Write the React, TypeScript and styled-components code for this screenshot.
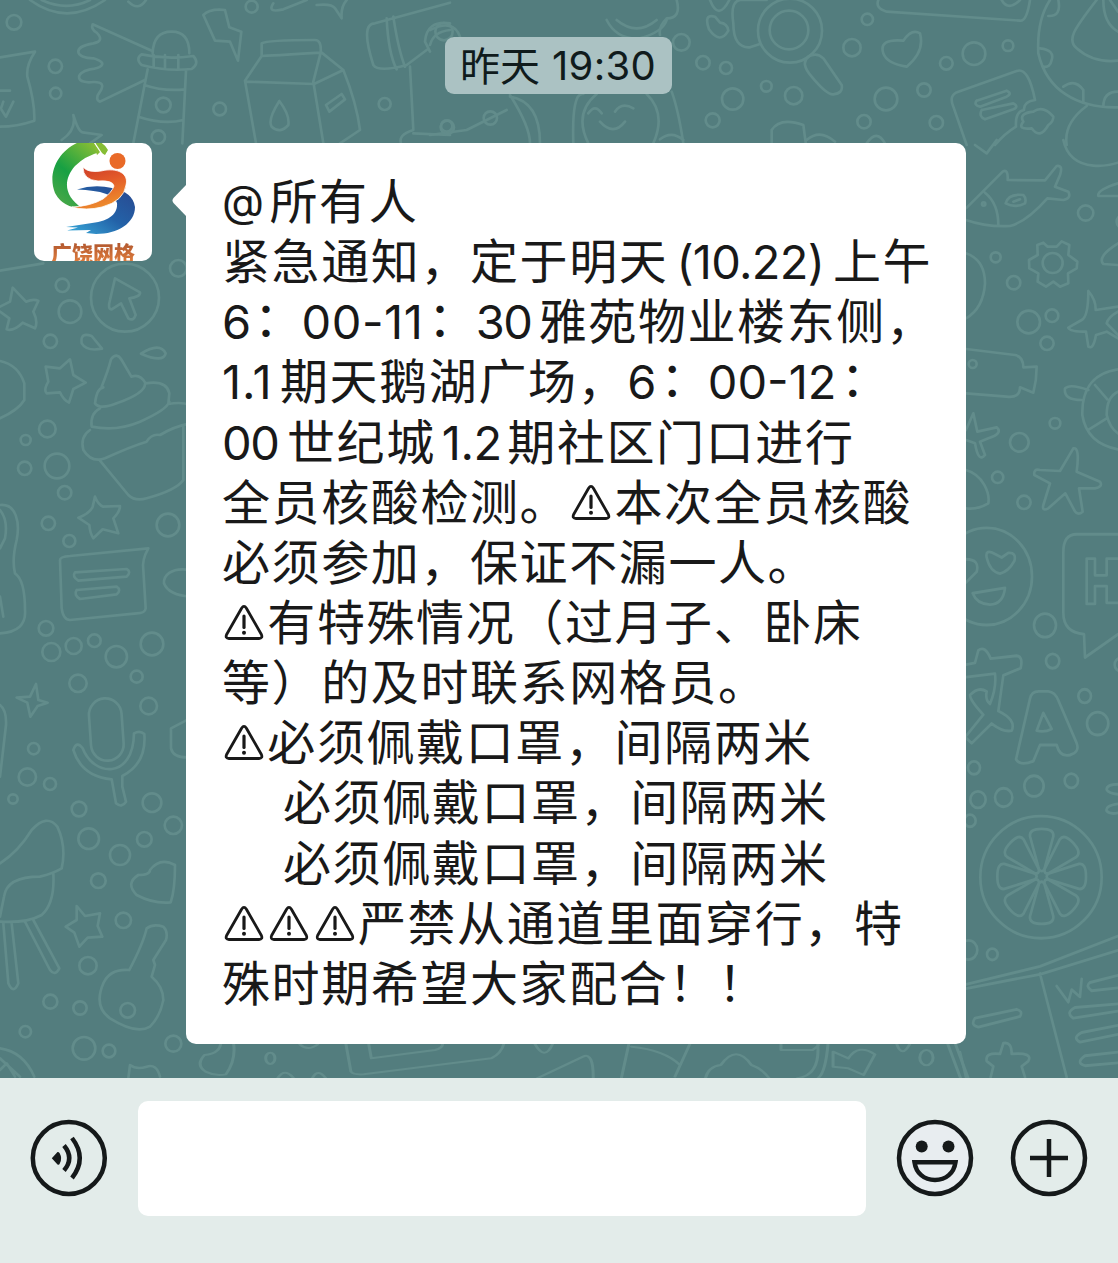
import React from "react";
import styled, { createGlobalStyle } from "styled-components";

const GlobalStyle = createGlobalStyle`
  * { box-sizing: border-box; }
  body { margin: 0; background: #e3ecea; }
`;

const Screen = styled.main`
  width: 1118px;
  height: 1263px;
  display: flex;
  flex-direction: column;
  overflow: hidden;
  font-family: Inter, "Noto Sans CJK SC", sans-serif;
  color: #191919;
`;

const Chat = styled.section`
  position: relative;
  height: 1078px;
  flex: none;
  display: flex;
  flex-direction: column;
  align-items: stretch;
  padding-top: 37px;
  background: #537d7e;
  overflow: hidden;
`;

const Wallpaper = styled.svg`
  position: absolute;
  inset: 0;
  fill: none;
  stroke: #628c8b;
  stroke-width: 8;
  stroke-linecap: round;
  stroke-linejoin: round;
`;

const TimeStamp = styled.time`
  position: relative;
  align-self: center;
  width: 227px;
  height: 57px;
  display: flex;
  align-items: flex-start;
  margin-right: 1px;
  padding-left: 15px;
  border-radius: 9px;
  background: #abc2c3;
  color: #101b1c;
  font-size: 40px;
  white-space: pre;
`;

const TimeDay = styled.span`
  width: 92px;
  font-family: "Noto Sans CJK SC", sans-serif;
  line-height: 55px;
`;

const TimeClock = styled.span`
  letter-spacing: 0.3px;
  line-height: 58px;
`;

const MessageRow = styled.article`
  position: relative;
  display: flex;
  align-items: flex-start;
  margin-top: 49px;
  padding-left: 34px;
`;

const Avatar = styled.div`
  width: 118px;
  height: 118px;
  border-radius: 10px;
  overflow: hidden;
  background: #fff;
  display: flex;
  flex-direction: column;
`;

const AvatarMark = styled.svg`
  display: block;
  flex: none;
`;

const AvatarName = styled.span`
  height: 22px;
  padding-left: 17px;
  font: 900 21px/26px "Noto Sans CJK SC", sans-serif;
  white-space: nowrap;
  background: linear-gradient(#a8502c, #dd7b3c);
  background-clip: text;
  color: transparent;
`;

const Tail = styled.svg`
  display: block;
  margin: 40px -1px 0 20px;
  flex: none;
`;

const Bubble = styled.div`
  width: 780px;
  height: 901px;
  padding: 27px 0 0 36px;
  border-radius: 10px;
  background: #fff;
`;

const Line = styled.div<{ $indent?: number }>`
  display: flex;
  align-items: flex-start;
  height: 60.15px;
  padding-left: ${(p) => p.$indent ?? 0}px;
  white-space: pre;
`;

const Han = styled.span`
  font: 400 48px/57px "Noto Sans CJK SC", sans-serif;
  letter-spacing: 1.6px;
`;

const Colon = styled(Han)`
  transform: translate(2px, -3px);
`;

const Latin = styled.span<{ $width: number; $pad?: number; $track?: number; $size?: number }>`
  width: ${(p) => p.$width}px;
  flex: none;
  padding-left: ${(p) => p.$pad ?? 0}px;
  font: 400 ${(p) => p.$size ?? 47}px/63px Inter, sans-serif;
  letter-spacing: ${(p) => p.$track ?? 0}px;
`;

const WarnBox = styled.svg`
  flex: none;
  display: block;
`;

const Warn = () => (
  <WarnBox width="45.3" height="60" viewBox="0 0 45.3 60" role="img" aria-label="⚠">
    <path
      d="M19.6 17.2Q22 13.600 24.400 17.200L39.400 43.500Q41 47.300 37 47.500H7Q3 47.300 4.600 43.500Z"
      fill="none"
      stroke="#191919"
      strokeWidth="2.8"
      strokeLinejoin="round"
    />
    <path d="M22 25V36.500" stroke="#191919" strokeWidth="3.200" strokeLinecap="round" />
    <circle cx="22" cy="41.800" r="2" fill="#191919" />
  </WarnBox>
);

const Toolbar = styled.footer`
  flex: 1;
  display: flex;
  align-items: flex-start;
  padding: 23px 30px 0;
  background: #e3ecea;
`;

const IconButton = styled.button<{ $left?: number }>`
  width: 78px;
  height: 78px;
  margin: 18px 0 0 ${(p) => p.$left ?? 0}px;
  padding: 0;
  border: 0;
  background: none;
  color: #15191a;
`;

const Field = styled.input`
  width: 728px;
  height: 115px;
  margin-left: 29.500px;
  border: 0;
  border-radius: 10px;
  background: #fff;
  font-size: 46px;
  outline: 0;
`;

const Glyph = styled.svg`
  display: block;
  fill: none;
  stroke: currentColor;
  stroke-width: 4.5;
`;

type Dot = [number, number, number];
const Dots = ({ items }: { items: Dot[] }) => (
  <>
    {items.map(([x, y, r], i) => (
      <circle key={i} cx={x} cy={y} r={r} />
    ))}
  </>
);

const SEGMENT = "M-8-20L-35-112Q-38-133 0-133Q38-133 35-112L8-20Q0-10-8-20Z";

const Doodles = () => (
  <Wallpaper width="1118" height="1078" viewBox="0 0 1118 1078" aria-hidden="true">
    <g transform="scale(.33333)">
      <path d="M90 0Q200 80 315 0M125 0Q200 35 270 0M385 5Q415 35 438 0M0 172L105 155Q78 195 82 230Q105 310 103 362Q50 380 0 380M0 272H30M5 330L18 350L40 305M3 325L10 305" />
      <path d="M457 153L278 73Q272 88 290 98Q315 123 280 130C215 140 225 175 280 175C330 190 300 205 270 208C220 220 230 253 280 246Q320 245 300 275Q283 298 300 305L435 240" />
      <path d="M458 160Q460 95 515 95Q568 95 568 160M425 163Q500 180 580 168Q600 190 575 207Q500 215 425 195Q405 176 425 163M461 165V202M495 165V207M535 165V207M443 208L400 430M558 212L547 430M433 255Q490 275 555 268M415 350Q490 375 550 360" />
      <path d="M610 45Q630 25 675 30L688 82L724 95L714 182L690 125L645 122ZM785 130Q800 120 945 120Q965 120 962 158Q850 165 785 168ZM785 168L735 242L768 430M962 158L940 245L970 430M738 245L942 252L1030 210L965 158M1030 210Q1070 310 1080 390L1020 430M978 315L1025 282L1035 298L988 335ZM838 303Q802 360 815 380Q840 403 865 375Q870 345 838 303Z" />
      <path d="M220 345Q235 395 248 397L305 405L270 430M220 345Q230 390 185 420M820 10Q800 40 850 28L920 0M950 15Q995 10 1005 25L1025 55Q1022 20 1040 0M1350 8L1125 70Q1080 70 1120 195Q1135 218 1220 195L1280 150M1160 55Q1165 160 1190 208M1180 50Q1195 150 1215 200M1350 70Q1280 60 1275 125L1290 155M1350 90Q1300 95 1290 135M1230 200L1240 390Q1190 405 1205 435M1240 400L1350 405" />
      <Dots items={[[42,67,22],[166,199,20],[167,280,17],[755,20,18],[659,327,19],[1154,312,18],[490,315,22],[475,411,20],[1340,378,17]]} />
    </g>
    <g transform="translate(660 0) scale(.33333)">
      <path d="M50 0Q65 55 20 55Q-5 80 0 105M150 0Q175 65 208 0M165 50Q130 40 147 88Q180 135 205 92Q202 70 180 68ZM320 0H240Q210 5 220 70Q220 145 270 142L300 132M445 170Q420 190 455 230Q500 285 520 283Q550 280 545 255L490 175Q470 155 445 170M655 0Q645 25 680 35L1080 62Q1100 65 1110 0M1025 0Q1045 35 1080 0M670 160Q655 115 730 122Q755 85 780 100Q795 155 740 200Q680 190 670 160" />
      <circle cx="390" cy="92" r="96" /><circle cx="387" cy="90" r="58" />
      <path d="M1170 0Q1130 60 1135 160C1160 270 1250 325 1374 322M1310 0C1240 90 1220 120 1250 145Q1300 190 1374 182M1195 0Q1205 50 1165 48M1140 145Q1185 150 1175 180Q1170 205 1150 200M1210 260Q1245 235 1270 270V305M1330 320Q1330 275 1374 275M1330 0Q1330 70 1374 95M1350 0L1374 35M1280 318Q1210 370 1220 435" />
      <path d="M920 435L880 320Q865 285 895 275L1070 213Q1105 200 1125 300Q1090 305 1092 330Q1065 335 1068 380Q1035 400 1005 435M950 302L1040 272Q1058 280 1040 290L960 320Q940 315 950 302M965 330L1060 310Q1078 320 1060 328L975 358Q955 350 965 330M1120 335Q1150 315 1180 350Q1180 365 1165 375Q1140 420 1115 385Q1070 390 1090 365Q1075 340 1120 335" />
      <path d="M35 275Q55 330 70 430M0 418Q35 390 70 420M335 435V390Q360 350 430 375L438 435M440 420Q480 385 525 425M620 430Q650 385 675 430" />
      <Dots items={[[64,127,25],[129,188,20],[198,204,18],[319,259,16],[218,297,32],[401,287,26],[158,361,21],[576,143,26],[622,58,17],[859,190,19],[942,161,34],[1044,137,16],[792,270,20],[678,297,34],[612,365,20],[829,368,20]]} />
    </g>
    <g transform="translate(430 20) scale(.33333)">
      <path d="M0 30Q70 -5 90 50M530 0Q560 60 630 55Q700 35 710 0M560 0Q620 50 680 0M0 345L110 330L230 270M240 225Q300 320 300 370M240 230Q330 245 330 370M430 370Q425 215 460 222M475 370Q430 280 500 222M650 222Q710 280 670 370M475 280Q495 250 515 280M555 275Q575 245 610 265M510 305Q550 350 585 305" />
      <Dots items={[[42,35,26],[52,322,20],[181,294,20]]} />
    </g>
    <g transform="translate(0 260) scale(.33333)">
      <path d="M0 32L130 10M0 155L28 175L20 208Q40 215 68 188L105 205Q115 185 100 155L115 123Q102 115 78 125L38 83L30 125L0 140" />
      <circle cx="375" cy="113" r="102" />
      <path d="M345 55L420 97Q422 110 388 115L407 165Q400 185 385 175L363 130L335 148Q322 148 330 120ZM245 250Q240 215 275 228L306 266Q260 275 245 250M423 281Q480 245 497 280Q490 310 423 281" />
      <path d="M210 298L220 345L257 368L220 387L207 428Q190 420 180 397L140 400Q130 390 145 365L137 320L180 325ZM0 303Q55 315 73 370V420Q55 450 0 475" />
      <path d="M305 380Q325 330 333 298Q350 275 365 300L394 350Q420 340 437 370Q500 360 508 400L505 432Q545 425 570 435M310 382Q290 385 285 430Q300 450 350 430Q435 400 435 372M300 445Q270 460 275 500Q350 515 420 485Q500 450 508 425M270 510Q240 530 250 570Q275 610 315 595Q390 560 440 545Q455 520 480 525Q520 500 570 490M300 602L385 705Q405 725 440 715Q530 690 550 660V500" />
      <path d="M285 710Q295 735 310 740L360 738Q360 755 340 775L355 820L308 808L280 835Q270 820 268 795L235 773Q270 760 278 740ZM0 735C50 730 60 790 50 840Q35 900 45 940Q75 960 75 1050Q80 1115 0 1120M0 750Q25 780 15 835L0 865M0 1010L10 1070" />
      <path d="M180 900Q180 890 210 888L445 865Q425 900 430 930L437 1045Q435 1060 410 1060L210 1080Q190 1080 185 1045ZM225 937L380 927Q395 935 380 950L235 962Q215 950 225 937M230 990L350 980Q365 990 350 1003L240 1017Q220 1005 230 990M570 930C510 920 490 950 492 970Q505 1005 570 1010" />
      <Dots items={[[187,76,20],[210,155,34],[151,244,20],[142,507,25],[77,540,15],[74,625,20],[171,618,37],[194,698,20],[145,790,20],[208,843,18],[504,795,34],[138,1105,22],[154,1176,27],[221,1158,24],[283,1142,19],[349,1190,32],[456,1152,34],[535,25,25]]} />
    </g>
    <g transform="translate(0 670) scale(.33333)">
      <path d="M108 42L115 90L143 98L113 108L91 140L82 98L50 83L90 80ZM0 105Q20 120 18 165L0 320" />
      <rect x="270" y="85" width="98" height="187" rx="49" transform="rotate(-4 320 180)" />
      <path d="M220 240Q230 210 248 235C280 320 400 330 402 190Q420 180 433 192Q440 280 367 318V350L378 395Q365 415 348 400L335 328Q245 320 220 240M570 145L513 175V235Q520 265 570 262M0 580Q55 545 95 480Q140 430 172 470Q200 530 185 595Q160 610 120 620Q20 620 12 680L0 740M160 610Q165 700 125 735Q80 760 0 755M10 760L25 940Q40 975 55 940L35 760M75 755L150 900Q165 920 178 895L100 750" />
      <path d="M415 615Q450 615 450 600Q480 560 525 585Q525 660 512 697Q460 702 410 675Q375 640 415 615M230 708L255 738L300 730L293 768L307 800L263 803L238 830L223 788L197 770L230 750ZM388 900Q430 820 440 775Q460 760 490 770Q505 785 498 810L460 870L465 885L455 920Q490 950 490 990Q480 1040 450 1070Q410 1095 330 1045Q280 1010 310 940Q330 895 388 900M0 1135Q70 1145 103 1220M0 1165L60 1220M0 1200L20 1180L45 1220M385 1225L390 1185Q410 1200 440 1190Q470 1180 480 1220" />
      <Dots items={[[234,40,26],[410,20,18],[446,108,25],[101,236,17],[82,321,26],[150,342,18],[39,387,14],[237,417,22],[266,506,31],[360,555,30],[433,508,22],[456,398,28],[520,466,26],[295,632,22],[370,751,23],[264,887,26],[151,995,21],[240,1014,20],[76,1085,17],[252,1135,34],[327,1143,19],[383,1021,22],[520,1121,24]]} />
    </g>
    <g transform="translate(960 140) scale(.33333)">
      <path d="M45 15L80 40L110 0M310 0Q325 70 400 77Q440 80 474 68M18 205L128 95Q145 85 143 120L255 121L290 78Q310 75 300 105L285 140L325 155Q335 175 310 180L262 175Q200 245 150 258Q80 262 18 240M75 158Q115 190 115 255M137 190Q145 160 190 165Q200 175 195 190Q165 205 137 190M160 185L180 178M474 130Q410 150 415 168H474M474 310Q410 350 430 372L474 375" />
      <path d="M250 308L263 320H290L305 304L328 315L325 345L352 365L350 385L324 400L325 430L300 440L280 425L258 440L233 425L235 400L208 385L207 360L233 345L232 315Z" />
      <circle cx="278" cy="369" r="30" />
      <path d="M18 340Q75 360 75 430Q70 505 18 535M385 453Q408 480 407 510L474 500M385 453Q385 530 365 540L325 563Q330 575 378 575L385 620Q400 630 408 585L440 575L474 595M474 515Q445 530 440 550L474 585M18 627L165 645Q190 650 190 682L230 680Q230 720 220 758L180 742Q180 775 140 770L18 760" />
      <path d="M474 688C390 700 365 760 367 825Q380 910 474 928M474 755Q440 770 440 825Q450 865 474 880M385 750Q330 730 315 745Q310 780 365 780M405 735L442 778M385 870L440 835M18 870L40 820L52 875L110 862Q130 880 85 895L60 905L75 945Q55 970 45 910L18 900M18 990C70 1005 90 1060 85 1090Q50 1110 18 1105M340 925Q360 920 350 995L420 1025Q430 1040 405 1045L357 1045L368 1115Q350 1130 340 1105L316 1060L265 1105Q245 1115 250 1095L270 1030L223 1005Q220 985 240 990L300 993Z" />
      <Dots items={[[71,192,5],[377,219,23],[107,352,15],[161,428,20],[206,546,34],[276,527,19],[261,610,20],[38,672,12],[178,907,28],[285,850,16],[113,1012,17],[192,1087,20],[490,245,20]]} />
    </g>
    <g transform="translate(960 520) scale(.33333 .35714)">
      <circle cx="80" cy="158" r="136" />
      <path d="M80 105Q75 80 105 95L125 105L145 92Q170 90 163 115Q145 145 120 150Q90 145 80 105M18 110Q60 110 50 145L18 175M38 205L135 190Q130 235 90 237Q50 235 38 205M474 40H350Q310 40 310 90V260Q310 315 372 320L375 385L474 320M380 108H405V155H440V108H474M380 108V235H405V185H440V232H474" />
      <path d="M18 405L45 400L55 365Q75 350 92 388L170 380Q190 382 182 415L130 435L115 535Q170 560 155 590Q130 595 95 570L35 625L18 610M18 440L105 430Q110 470 90 515Q75 505 80 480Q55 465 30 490Q30 505 70 545L18 605M210 500Q215 478 240 480H265Q285 482 295 505L350 625Q360 650 330 658Q300 665 290 630H240L220 675Q180 690 168 670ZM250 540L275 585Q255 595 230 590ZM474 740Q440 740 440 755Q445 765 474 768M474 795Q435 800 440 815Q450 825 474 820" />
      <ellipse cx="243" cy="1000" rx="182" ry="171" />
      {[0, 45, 90, 135, 180, 225, 270, 315].map((a) => (
        <path key={a} d={SEGMENT} transform={`translate(245 998) rotate(${a})`} />
      ))}
      <path d="M18 1300L240 1250L474 1165M18 1312L240 1272L474 1205M240 1270L320 1560M290 1305L325 1350L335 1315L360 1335L365 1285M474 1275L390 1295Q375 1305 395 1318L474 1310M474 1355L345 1365Q315 1380 340 1395L474 1375M474 1415L365 1435Q335 1450 360 1462L474 1440M474 1490L375 1500Q345 1520 375 1528L474 1520M45 1395L170 1370Q190 1375 180 1390L55 1420Q30 1415 45 1395M130 1465Q155 1460 155 1495Q220 1490 205 1515L185 1530L195 1560M130 1465L120 1495Q75 1490 80 1515L100 1530L92 1560M0 1490L18 1560" />
      <Dots items={[[255,295,33],[278,395,20],[374,493,19],[413,570,32],[42,694,18],[54,783,23],[131,777,26],[222,745,29],[334,730,20],[30,842,17],[97,1216,16],[25,1204,27],[482,405,18]]} />
    </g>
    <g transform="translate(180 1035) scale(.5102 .33333)" strokeWidth="6">
      <path d="M80 20Q80 55 48 60Q30 90 50 110Q70 125 90 118Q110 75 105 25M325 25L335 110Q340 120 360 118L610 70Q630 55 635 25M370 28L375 70L500 45Q515 40 515 25M700 130L790 65Q810 50 810 128M880 25L865 130M885 35Q950 45 980 90M1000 25L970 125M1030 130Q1035 95 1060 90Q1090 25 1120 90Q1140 100 1155 130M1178 28V45H1240Q1255 30 1250 28M1250 28Q1255 120 1210 130M1270 28Q1265 115 1250 130M1280 50L1310 70Q1330 25 1362 58L1340 120L1310 100L1280 95ZM1505 28L1530 130M1520 28L1545 130" />
      <ellipse cx="177" cy="70" rx="9" ry="17" /><ellipse cx="1463" cy="68" rx="13" ry="23" />
      <path d="M235 28Q250 50 270 28M192 128Q205 98 222 128M260 128Q270 100 285 128M695 25Q715 80 730 28M1405 28Q1415 70 1430 28" />
    </g>
  </Wallpaper>
);

const AvatarLogo = () => (
  <AvatarMark width="118" height="96" viewBox="0 0 118 96" aria-hidden="true">
    <defs>
      <linearGradient id="leaf" x1="0.8" y1="0" x2="0.2" y2="1">
        <stop offset="0" stopColor="#86bd35" />
        <stop offset=".55" stopColor="#17a043" />
        <stop offset="1" stopColor="#4ca848" />
      </linearGradient>
      <linearGradient id="flame" x1="0" y1="0" x2=".4" y2="1">
        <stop offset="0" stopColor="#c93828" />
        <stop offset=".5" stopColor="#e35a29" />
        <stop offset="1" stopColor="#ed8a2c" />
      </linearGradient>
      <linearGradient id="wave" x1="1" y1="0" x2="0" y2="1">
        <stop offset="0" stopColor="#29478e" />
        <stop offset=".5" stopColor="#2362a8" />
        <stop offset="1" stopColor="#3aaddc" />
      </linearGradient>
    </defs>
    <path d="M43 46.500Q60 41 78 45Q99 49 101 64C101 80 84 91 62 91L52 90L57 87L33 87.500L44 84.500L32 84L58 80C76 78 84 70 83 60Q80 48 43 46.500Z" fill="url(#wave)" />
    <path d="M60-1L66 9Q51 13 41 23C28 38 31 54 48 65Q29 65 21 50C13 30 24 8 45-1Z" fill="url(#leaf)" />
    <path d="M59-1L66 9L63 12M61-1Q68-3 74 7L71 12Q64 9 61-1Z" fill="#86bd35" />
    <path d="M60-1L68 11" stroke="#fff" strokeWidth="1.200" />
    <path d="M49 24Q54 30 67 28C84 24 95 31 92 42Q90 58 68 64Q52 68 38 64Q57 63 69 56Q78 49 80 43Q79 37 64 38Q49 37 49 24Z" fill="url(#flame)" stroke="#fff" strokeWidth=".8" />
    <circle cx="83.500" cy="18" r="8" fill="#e96a28" />
  </AvatarMark>
);

export default function App() {
  return (
    <Screen>
      <GlobalStyle />
      <Chat>
        <Doodles />
        <TimeStamp>
          <TimeDay>昨天</TimeDay>
          <TimeClock>19:30</TimeClock>
        </TimeStamp>
        <MessageRow>
          <Avatar>
            <AvatarLogo />
            <AvatarName>广饶网格</AvatarName>
          </Avatar>
          <Tail width="15" height="36" viewBox="0 0 15 36" aria-hidden="true">
            <path d="M15 1L1.500 15Q-.5 17.500 1.500 20L15 34Z" fill="#fff" />
          </Tail>
          <Bubble>
            <Line><Latin $width={47.5} $size={43.500}>@</Latin><Han>所有人</Han></Line>
            <Line><Han>紧急通知，定于明天</Han><Latin $width={164.5} $pad={8} $track={-0.7}>(10.22)</Latin><Han>上午</Han></Line>
            <Line><Latin $width={30} $track={-1}>6</Latin><Colon>：</Colon><Latin $width={124.5} $track={0.5}>00-11</Latin><Colon>：</Colon><Latin $width={63} $track={-1.5}>30</Latin><Han>雅苑物业楼东侧，</Han></Line>
            <Line><Latin $width={58} $track={1}>1.1</Latin><Han>期天鹅湖广场，</Han><Latin $width={31} $track={-1}>6</Latin><Colon>：</Colon><Latin $width={131}>00-12</Latin><Colon>：</Colon></Line>
            <Line><Latin $width={65} $track={-1.5}>00</Latin><Han>世纪城</Han><Latin $width={71.5} $pad={6} $track={-0.5}>1.2</Latin><Han>期社区门口进行</Han></Line>
            <Line><Han>全员核酸检测。</Han><Warn /><Han>本次全员核酸</Han></Line>
            <Line><Han>必须参加，保证不漏一人。</Han></Line>
            <Line><Warn /><Han>有特殊情况（过月子、卧床</Han></Line>
            <Line><Han>等）的及时联系网格员。</Han></Line>
            <Line><Warn /><Han>必须佩戴口罩，间隔两米</Han></Line>
            <Line $indent={61}><Han>必须佩戴口罩，间隔两米</Han></Line>
            <Line $indent={61}><Han>必须佩戴口罩，间隔两米</Han></Line>
            <Line><Warn /><Warn /><Warn /><Han>严禁从通道里面穿行，特</Han></Line>
            <Line><Han>殊时期希望大家配合！！</Han></Line>
          </Bubble>
        </MessageRow>
      </Chat>
      <Toolbar>
        <IconButton aria-label="语音">
          <Glyph width="78" height="78" viewBox="0 0 78 78">
            <circle cx="38.800" cy="39" r="36" />
            <path d="M21.800 39.200L27.500 33Q29 32.500 29.800 34.500Q32.500 39.200 29.800 44.500Q29 46.500 27.500 45.500Z" fill="currentColor" stroke="none" />
            <path d="M34 26.500Q44.500 39.200 34 51.500M42 19Q57.500 39.200 42 59" />
          </Glyph>
        </IconButton>
        <Field aria-label="消息" />
        <IconButton $left={30} aria-label="表情">
          <Glyph width="78" height="78" viewBox="0 0 78 78">
            <circle cx="39" cy="39" r="36" fill="#e8edf0" />
            <circle cx="25.700" cy="27.500" r="6" fill="currentColor" stroke="none" />
            <circle cx="52.500" cy="27.500" r="6" fill="currentColor" stroke="none" />
            <path d="M18.500 43.200H59.500C58 54 50 61 39 61S20 54 18.500 43.200Z" />
          </Glyph>
        </IconButton>
        <IconButton $left={36.5} aria-label="更多">
          <Glyph width="78" height="78" viewBox="0 0 78 78">
            <circle cx="39" cy="39" r="36" />
            <path d="M20 39H58M39 20V58" />
          </Glyph>
        </IconButton>
      </Toolbar>
    </Screen>
  );
}
